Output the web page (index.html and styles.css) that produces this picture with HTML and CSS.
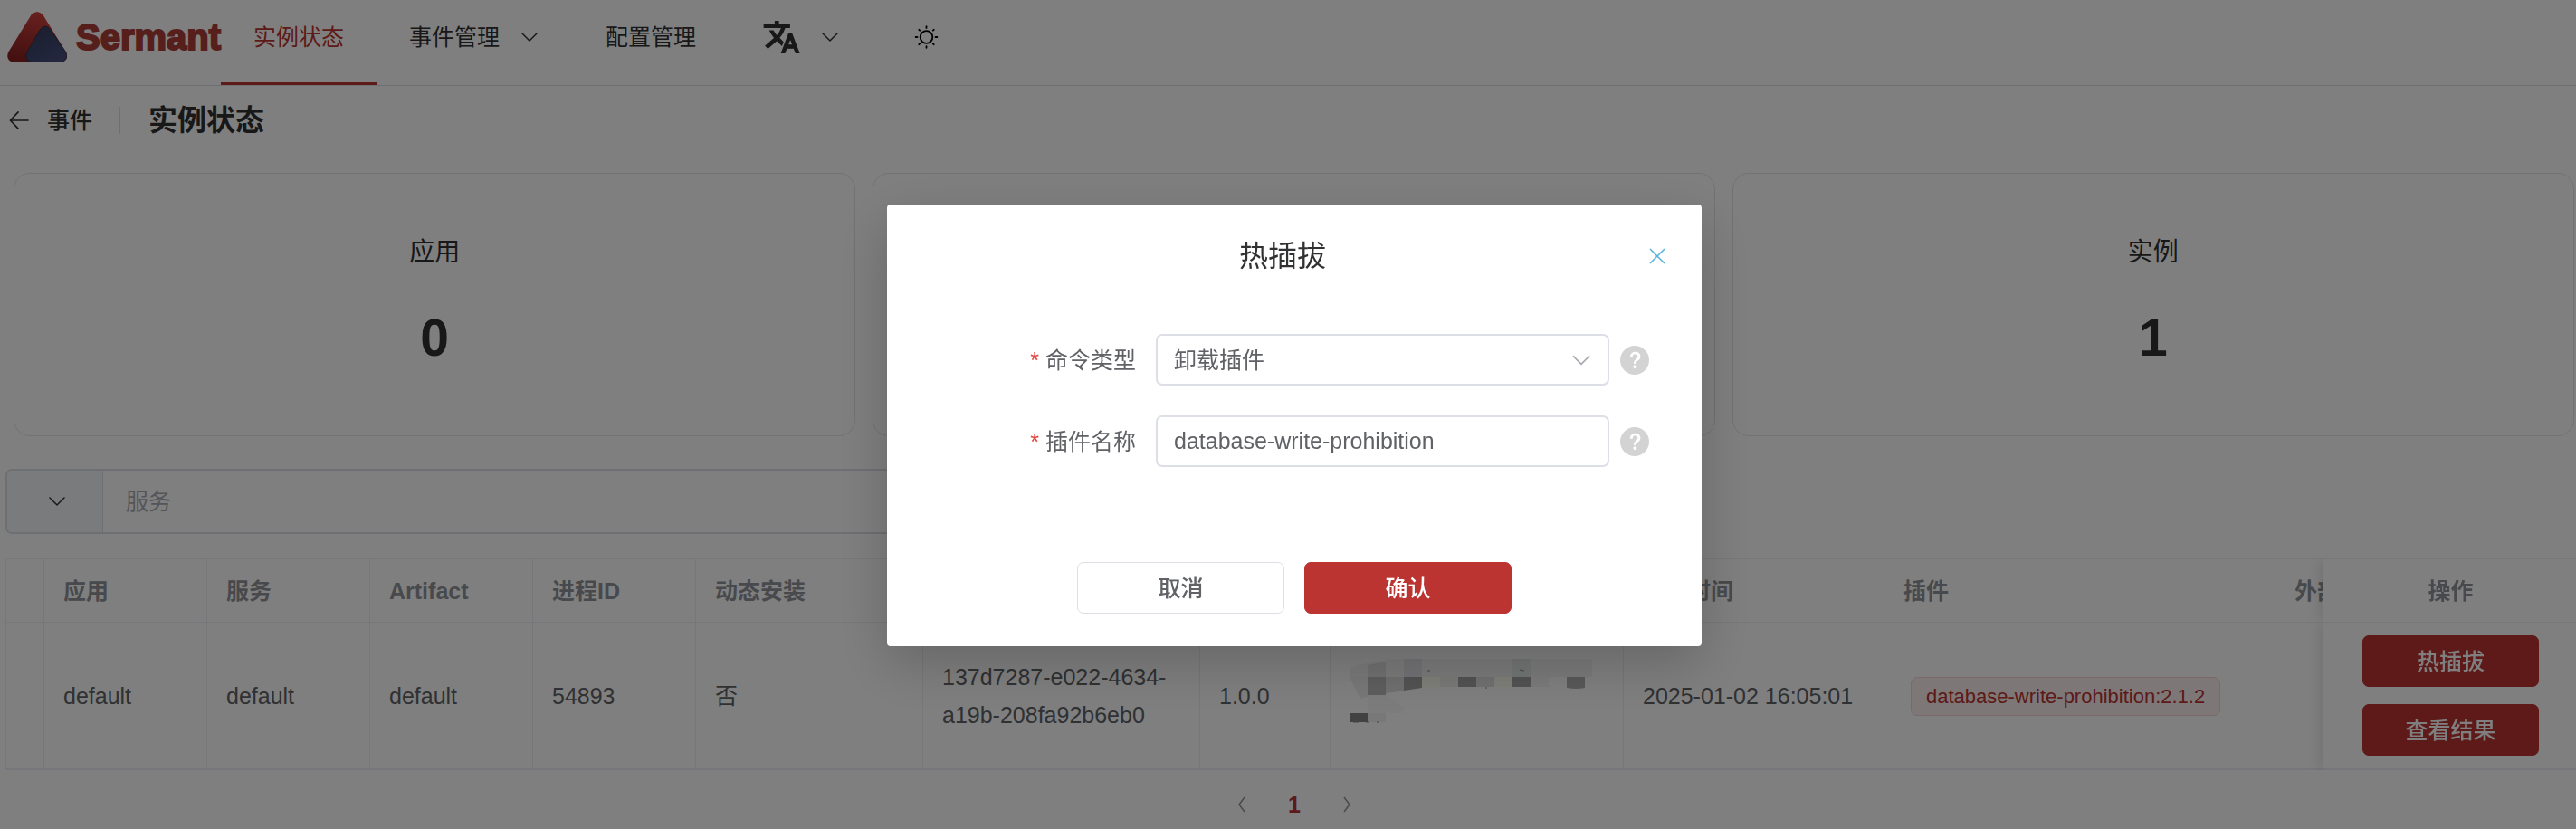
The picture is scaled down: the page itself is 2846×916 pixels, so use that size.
FILE: index.html
```html
<!DOCTYPE html>
<html lang="zh-CN">
<head>
<meta charset="utf-8">
<title>Sermant</title>
<link rel="stylesheet" href="styles.css">
</head>
<body>
<svg class="defs" aria-hidden="true">
  <symbol id="down" viewBox="0 0 24 24"><path d="M4 8l8 8 8-8" fill="none" stroke="currentColor" stroke-width="1.500" stroke-linecap="round" stroke-linejoin="round"/></symbol>
  <symbol id="help" viewBox="64 64 896 896"><path fill="currentColor" d="M512 64a448 448 0 1 1 0 896 448 448 0 0 1 0-896m23.744 191.488c-52.096 0-92.928 14.784-123.2 44.352-30.976 29.568-45.76 70.4-45.76 122.496h80.256c0-29.568 5.632-52.8 17.6-68.992 13.376-19.712 35.2-28.864 66.176-28.864 23.936 0 42.944 6.336 56.32 19.712 12.672 13.376 19.712 31.68 19.712 54.912 0 17.6-6.336 34.496-19.008 49.984l-8.448 9.856c-45.76 40.832-73.216 70.4-82.368 89.408-9.856 19.008-14.08 42.24-14.08 68.992v9.856h80.96v-9.856c0-16.896 3.52-31.68 10.56-45.76 6.336-12.672 15.488-24.64 28.16-35.2 33.792-29.568 54.208-48.576 60.544-55.616 16.896-22.528 26.048-51.392 26.048-86.592 0-42.944-14.08-76.736-42.24-101.376-28.16-25.344-65.472-37.312-111.232-37.312m-12.672 406.208a54.272 54.272 0 0 0-38.72 14.784 49.408 49.408 0 0 0-15.488 38.016c0 15.488 4.928 28.16 15.488 38.016A54.848 54.848 0 0 0 523.072 768c15.488 0 28.16-4.928 38.72-14.784a51.52 51.52 0 0 0 16.192-38.72 51.968 51.968 0 0 0-15.488-38.016 55.936 55.936 0 0 0-39.424-14.784"/></symbol>
</svg>

<header class="header">
  <a class="logo" href="#">
    <svg class="logo-mark" viewBox="0 0 66 56" aria-hidden="true">
      <defs>
        <linearGradient id="red" x1="0.6" y1="0" x2="0.3" y2="1"><stop offset="0" stop-color="#d0433e"/><stop offset="1" stop-color="#882020"/></linearGradient>
        <linearGradient id="navy" x1="0" y1="0" x2="0.6" y2="1"><stop offset="0" stop-color="#333b58"/><stop offset="1" stop-color="#464d7c"/></linearGradient>
      </defs>
      <path d="M26.500 3.500Q33-3.500 39.500 3.500L65 45Q68 54 59 56H7Q-2 54 1 45Z" fill="url(#red)"/>
      <path d="M36 20Q42 12 48 20L65 45Q68 54 59 56H28Q18 54 21.500 45Z" fill="url(#navy)" stroke="#2c2c40" stroke-width="0.800"/>
    </svg>
    <span class="logo-name">Sermant</span>
  </a>
  <nav class="nav">
    <a class="nav-item active" href="#">实例状态</a>
    <a class="nav-item" href="#">事件管理<svg class="chevron"><use href="#down"/></svg></a>
    <a class="nav-item" href="#">配置管理</a>
    <button class="nav-item lang" type="button" aria-label="语言">
      <svg class="tool-icon" viewBox="0 0 24 24"><path fill="currentColor" d="M12.870 15.070l-2.540-2.510.030-.030A17.520 17.520 0 0 0 14.070 6H17V4h-7V2H8v2H1v1.990h11.170C11.500 7.920 10.440 9.750 9 11.350 8.070 10.320 7.300 9.190 6.690 8h-2c.730 1.630 1.730 3.170 2.980 4.560L2 17.500 3.400 19 9 14l3.110 3.110zM18.500 10h-2L12 22h2l1.120-3h4.750L21 22h2zm-2.620 7l1.620-4.330L19.120 17z" stroke="currentColor" stroke-width="0.700"/></svg>
      <svg class="chevron"><use href="#down"/></svg>
    </button>
    <button class="nav-item theme" type="button" aria-label="主题">
      <svg class="tool-icon" viewBox="0 0 46 46" fill="none" stroke="#000" stroke-width="2" stroke-linecap="round"><circle cx="23" cy="23" r="7.500"/><path d="M23 10v2M23 34v2M10 23h2M34 23h2M14 14l1 1M31 31l1 1M14 32l1-1M31 15l1-1"/></svg>
    </button>
  </nav>
</header>

<main class="main">
  <div class="page-header">
    <a class="back" href="#"><svg class="back-icon" viewBox="0 0 24 24" fill="none" stroke="currentColor" stroke-width="1.800" stroke-linecap="round" stroke-linejoin="round"><path d="M23 12H2M11 2L1.500 12l9.500 10"/></svg>事件</a>
    <h1 class="page-title">实例状态</h1>
  </div>

  <section class="cards">
    <div class="card"><div class="card-name">应用</div><div class="card-value">0</div></div>
    <div class="card"></div>
    <div class="card"><div class="card-name">实例</div><div class="card-value">1</div></div>
  </section>

  <div class="search">
    <button class="search-type" type="button" aria-label="筛选类型"><svg class="chevron"><use href="#down"/></svg></button>
    <input class="search-input" type="text" placeholder="服务" aria-label="服务">
  </div>

  <div class="table-wrap">
    <table class="table">
      <colgroup><col class="w-expand"><col class="w-s"><col class="w-s"><col class="w-s"><col class="w-s"><col class="w-m"><col class="w-id"><col class="w-ver"><col class="w-ip"><col class="w-time"><col class="w-plugin"><col class="w-act"><col class="w-act"></colgroup>
      <thead>
        <tr><th></th><th>应用</th><th>服务</th><th>Artifact</th><th>进程ID</th><th>动态安装</th><th></th><th></th><th></th><th>心跳时间</th><th>插件</th><th>外部插件</th><th class="fixed">操作</th></tr>
      </thead>
      <tbody>
        <tr>
          <td></td><td>default</td><td>default</td><td>default</td><td>54893</td><td>否</td>
          <td>137d7287-e022-4634-a19b-208fa92b6eb0</td><td>1.0.0</td>
          <td>
            <svg class="mosaic" viewBox="0 0 270 82" aria-hidden="true">
              <path d="M0 20V12Q4 5 40 2V0H268V20Z" fill="#000" fill-opacity="0.040"/>
              <path d="M20 7L40 3V20H20Z" fill="#000" fill-opacity="0.080"/>
              <path d="M60 0h20v20H60z" fill="#4040a0" fill-opacity="0.080"/>
              <path d="M180 0h20v20H180z" fill="#208060" fill-opacity="0.080"/>
              <path d="M0 20H60V35L36 39 12 44Z" fill="#f0f0f0"/>
              <path d="M20 20h20v20H20z" fill="#bcbcbc"/>
              <path d="M40 20h20v15l-20 3z" fill="#e0e0e0"/>
              <path d="M60 20h20v12l-20 3z" fill="#a6a6a6"/>
              <path d="M80 20h20v12H80zM160 20h20v11H160z" fill="#fffff4"/>
              <path d="M100 20h20v11H100z" fill="#f2f2ea"/>
              <path d="M120 20h20v11H120zM180 20h20v11H180z" fill="#a6a6a6"/>
              <path d="M140 20h20v11H140z" fill="#e2e2e2"/>
              <path d="M200 20h20v11H200z" fill="#f6f6f6"/>
              <path d="M240 20h20v12q-10 2-20 0z" fill="#b2b2b2"/>
              <path d="M20 40h20l20 14v6H20z" fill="#f8f8f8"/>
              <path d="M0 60h20v10H0z" fill="#848484"/>
              <path d="M20 60h20v10H20z" fill="#f0f0f0"/>
              <path d="M4 70h6M18 70h3M30 70h3M86 13h3M188 12l5 1M150 32h2" stroke="#888" stroke-width="1"/>
            </svg>
          </td>
          <td>2025-01-02 16:05:01</td>
          <td><span class="tag">database-write-prohibition:2.1.2</span></td>
          <td></td>
          <td class="fixed"><div class="actions"><button class="btn primary" type="button">热插拔</button><button class="btn primary" type="button">查看结果</button></div></td>
        </tr>
      </tbody>
    </table>
  </div>

  <div class="pager">
    <button class="page-btn" type="button" aria-label="上一页"><svg viewBox="0 0 10 18"><path d="M8 1L2 9l6 8" fill="none" stroke="currentColor" stroke-width="1.500"/></svg></button>
    <button class="page-btn current" type="button">1</button>
    <button class="page-btn" type="button" aria-label="下一页"><svg viewBox="0 0 10 18"><path d="M2 1l6 8-6 8" fill="none" stroke="currentColor" stroke-width="1.500"/></svg></button>
  </div>
</main>

<div class="overlay">
  <form class="dialog" role="dialog" aria-labelledby="dialog-title">
    <div class="dialog-head">
      <h2 class="dialog-title" id="dialog-title">热插拔</h2>
      <button class="close" type="button" aria-label="关闭"><svg viewBox="0 0 18 18"><path d="M1 1l16 16M17 1L1 17" stroke="currentColor" stroke-width="1.700"/></svg></button>
    </div>
    <div class="dialog-body">
      <div class="field">
        <label class="label" for="type">命令类型</label>
        <div class="select-box">
          <select class="control" id="type"><option>卸载插件</option></select>
          <svg class="select-arrow"><use href="#down"/></svg>
        </div>
        <svg class="help"><use href="#help"/></svg>
      </div>
      <div class="field">
        <label class="label" for="name">插件名称</label>
        <input class="control" id="name" type="text" value="database-write-prohibition">
        <svg class="help"><use href="#help"/></svg>
      </div>
    </div>
    <div class="dialog-foot">
      <button class="btn plain" type="button">取消</button>
      <button class="btn primary" type="submit">确认</button>
    </div>
  </form>
</div>
</body>
</html>
```
FILE: styles.css
```css
:root {
  --red: #bb3431;
  --text: #303133;
  --regular: #606266;
  --muted: #909399;
  --line: #dcdfe6;
  --soft: #ebeef5;
}

* { box-sizing: border-box; }

body {
  margin: 0;
  min-height: 100vh;
  overflow: hidden;
  background: #fff;
  color: var(--text);
  font: 25px/36px "Liberation Sans", "Noto Sans CJK SC", sans-serif;
}

button, input, select { font: inherit; color: inherit; }
button { cursor: pointer; }
a { color: inherit; text-decoration: none; }
h1, h2 { margin: 0; }
svg { display: block; flex: none; }

.defs { position: absolute; width: 0; height: 0; }
.chevron { width: 24px; height: 24px; }

.header {
  display: flex;
  height: 95px;
  border-bottom: 1px solid var(--line);
}

.logo {
  display: flex;
  gap: 10px;
  width: 244px;
  height: 82px;
  padding-left: 8px;
  align-items: center;
}
.logo-mark { width: 66px; height: 56px; }
.logo-name {
  color: #ac3f38;
  font-size: 40px;
  font-weight: 700;
  -webkit-text-stroke: 2px #ac3f38;
}

.nav { display: flex; }
.nav-item {
  display: flex;
  gap: 21px;
  align-items: center;
  padding: 0 36px 10px;
  border: 0;
  border-bottom: 3px solid transparent;
  background: none;
}
.nav-item.active { color: var(--red); border-color: var(--red); }
.lang { gap: 19px; }
.tool-icon { width: 45px; height: 42px; }

.page-header {
  display: flex;
  align-items: center;
  height: 76px;
  padding-left: 10px;
}
.back {
  display: flex;
  gap: 20px;
  align-items: center;
  padding-right: 30px;
  border-right: 1px solid var(--line);
  line-height: 30px;
  font-weight: 500;
}
.back-icon { width: 22px; height: 22px; }
.page-title {
  padding-left: 31px;
  font-size: 32px;
  line-height: 44px;
  font-weight: 700;
}

.cards {
  display: grid;
  grid-template-columns: repeat(3, 1fr);
  gap: 19px;
  padding: 20px 2px 0 15px;
}
.card {
  height: 291px;
  padding-top: 66px;
  border: 1px solid #e4e4e6;
  border-radius: 18px;
  text-align: center;
}
.card-name { font-size: 28px; line-height: 42px; }
.card-value {
  padding-top: 42px;
  font-size: 57px;
  line-height: 62px;
  font-weight: 700;
}

.search {
  display: flex;
  width: 50%;
  height: 72px;
  margin: 36px 6px 0;
  border: 2px solid var(--line);
  border-radius: 7px;
}
.search-type {
  display: flex;
  width: 106px;
  align-items: center;
  justify-content: center;
  padding: 0 4px 0 8px;
  border: 0;
  border-right: 1px solid var(--line);
  border-radius: 5px 0 0 5px;
  background: #f5f7fa;
}
.search-input {
  flex: 1;
  min-width: 0;
  padding: 0 25px;
  border: 0;
  background: none;
  outline: 0;
}
.search-input::placeholder { color: #a8abb2; }

.table-wrap {
  margin: 27px 0 0 6px;
  overflow: hidden;
  border: 1px solid var(--soft);
  border-width: 1px 0 0 1px;
}
.table {
  width: 3067px;
  table-layout: fixed;
  border-spacing: 0;
}
.w-expand { width: 42px; }
.w-s { width: 180px; }
.w-m { width: 251px; }
.w-id { width: 306px; }
.w-ver { width: 144px; }
.w-ip { width: 324px; }
.w-time { width: 288px; }
.w-plugin { width: 432px; }
.w-act { width: 280px; }
.table th, .table td {
  padding: 0 21px;
  border-right: 1px solid var(--soft);
  border-bottom: 1px solid var(--soft);
  background: #fff;
  text-align: left;
  overflow-wrap: anywhere;
}
.table th { height: 70px; color: var(--muted); font-weight: 700; }
.table td {
  height: 163px;
  border-bottom-width: 2px;
  color: var(--regular);
  line-height: 42px;
}
.table .fixed {
  position: sticky;
  right: 0;
  padding: 0 18px 0 21px;
  border-right: 0;
  box-shadow: 0 0 18px rgba(0, 0, 0, 0.16);
  clip-path: inset(0 0 0 -18px);
  text-align: center;
}
.mosaic { width: 270px; height: 82px; }
.tag {
  display: inline-block;
  margin-left: 8px;
  padding: 0 16px;
  border: 1px solid #f6d2d1;
  border-radius: 7px;
  background: #fbeeee;
  color: var(--red);
  font-size: 22px;
  line-height: 41px;
}
.actions {
  display: flex;
  flex-direction: column;
  gap: 19px;
  align-items: center;
}
.actions .btn { width: 195px; }

.btn {
  height: 57px;
  padding: 0;
  border: 1px solid var(--line);
  border-radius: 7px;
  background: #fff;
  color: var(--regular);
  font-weight: 500;
  line-height: 36px;
}
.btn.primary { border-color: var(--red); background: var(--red); color: #fff; }

.pager {
  display: flex;
  justify-content: center;
  padding: 9px 0 0 14px;
}
.page-btn {
  display: flex;
  width: 58px;
  height: 57px;
  align-items: center;
  justify-content: center;
  padding: 0;
  border: 0;
  background: none;
  color: var(--muted);
}
.page-btn svg { width: 10px; height: 18px; }
.page-btn.current { color: var(--red); font-weight: 700; }

.overlay {
  position: fixed;
  inset: 0;
  display: flex;
  align-items: flex-start;
  justify-content: center;
  padding: 226px 0 0 14px;
  background: rgba(0, 0, 0, 0.5);
}
.dialog {
  width: 900px;
  padding: 36px;
  border-radius: 4px;
  background: #fff;
  box-shadow: 0 20px 60px rgba(0, 0, 0, 0.2);
}
.dialog-head {
  display: flex;
  height: 42px;
  align-items: center;
}
.dialog-title {
  flex: 1;
  font-size: 32px;
  line-height: 42px;
  font-weight: 400;
  text-align: center;
}
.close {
  width: 26px;
  padding: 4px;
  border: 0;
  background: none;
  color: #5fb4dc;
}
.dialog-body {
  display: grid;
  gap: 33px;
  padding: 65px 22px 105px 0;
}
.field {
  display: flex;
  align-items: center;
}
.label {
  flex: 1;
  padding-right: 22px;
  color: var(--regular);
  text-align: right;
}
.label::before {
  content: "*";
  margin-right: 7px;
  color: #e0443f;
}
.select-box { display: grid; align-items: center; }
.select-box > * { grid-area: 1 / 1; }
.select-arrow {
  width: 26px;
  height: 26px;
  margin-right: 18px;
  justify-self: end;
  color: #a8abb2;
  pointer-events: none;
}
.control {
  width: 501px;
  height: 57px;
  padding: 0 18px;
  border: 2px solid var(--line);
  border-radius: 7px;
  background: #fff;
  color: var(--regular);
  outline: 0;
  appearance: none;
}
.help {
  width: 32px;
  height: 32px;
  margin-left: 12px;
  color: #d3d3d3;
}
.dialog-foot {
  display: flex;
  gap: 22px;
  justify-content: center;
}
.dialog-foot .btn { width: 229px; }
```
